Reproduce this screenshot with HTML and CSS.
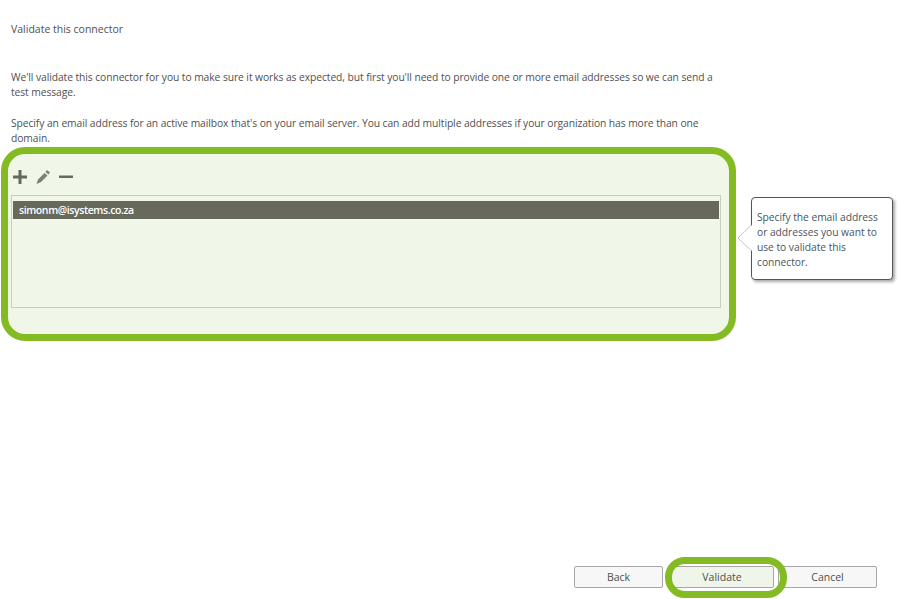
FILE: index.html
```html
<!DOCTYPE html>
<html lang="en">
<head>
  <meta charset="UTF-8" />
  <title>Validate this connector</title>
  <link rel="stylesheet" href="styles.css">
</head>
<body>

<div class="page">
  <h1 class="title">Validate this connector</h1>

  <div class="intro">
    <p>We'll validate this connector for you to make sure it works as expected, but first you'll need to provide one or more email addresses so we can send a test message.</p>
    <p>Specify an email address for an active mailbox that's on your email server. You can add multiple addresses if your organization has more than one domain.</p>
  </div>

  <div class="editor">
    <div class="frame">
      <div class="toolbar">
        <svg class="icon" width="16" height="14" viewBox="0 0 16 14"><path d="M6.500 0h3v5.500H15v3H9.500V14h-3V8.500H1v-3h5.500z"/></svg>
        <svg class="icon icon-pencil" width="16" height="14" viewBox="0 0 16 14"><path d="M12 0l3 2.500-1.500 2-3-2.500zM9.500 3l3 2.500-6.500 6.500-4.500 2 1.500-4.500z"/></svg>
        <svg class="icon" width="16" height="14" viewBox="0 0 16 14"><path d="M1 5.500h14v2.500H1z"/></svg>
      </div>
      <div class="listbox">
        <div class="row-selected">simonm@isystems.co.za</div>
      </div>
    </div>

    <div class="tip">
      <svg class="tip-arrow" width="15" height="26" viewBox="0 0 15 26"><path d="M15 0L1 13l14 13z" class="tip-arrow-fill"/><path d="M14 0.500L1 13l13 12.500" class="tip-arrow-line"/></svg>
      Specify the email address or addresses you want to use to validate this connector.
    </div>
  </div>

  <div class="footer">
    <button type="button" class="btn btn-back">Back</button>
    <button type="button" class="btn btn-validate">Validate<span class="ring"></span></button>
    <button type="button" class="btn btn-cancel">Cancel</button>
  </div>
</div>

</body>
</html>
```

FILE: styles.css
```css
html, body { margin: 0; padding: 0; background: #fff; }
body { font-family: "Open Sans", "Noto Sans", sans-serif; font-size: 10.5px; line-height: 15px; color: #505050; }
.page { height: 599px; box-sizing: border-box; display: flex; flex-direction: column; overflow: hidden; }
.title { margin: 22px 0 0 11px; font-size: 10.5px; font-weight: normal; line-height: 15px; color: #505050; }
.intro { margin: 33px 0 0 11px; width: 716px; font-size: 10.3px; letter-spacing: -0.08px; }
.intro p { margin: 0 0 16px; }
.editor { position: relative; margin: -15px 0 0 1px; }
.frame {
  width: 735px; height: 194px; box-sizing: border-box; padding: 16px 8px 0 3px;
  border: 7px solid #84bb23; border-radius: 24px; background: #f0f6e8;
}
.toolbar { display: flex; gap: 7px; height: 14px; margin-left: 1px; }
.icon { fill: #666a5e; display: block; }
.icon-pencil { fill: #7d8175; }
.listbox {
  margin-top: 11px; height: 113px; box-sizing: border-box; padding: 5px 1px;
  border: 1px solid #c4d0be;
}
.row-selected {
  height: 18px; line-height: 18px; padding-left: 6px; background: #66695b;
  color: #fff; font-weight: 600; letter-spacing: -0.4px;
}
.tip {
  position: absolute; left: 750px; top: 50px; width: 142px; height: 83px; box-sizing: border-box;
  padding: 12px 10px 0 5px; background: #fff; border: 1px solid #555; border-radius: 4px;
  box-shadow: 2px 2px 3px #aaa; color: #4a5560; font-size: 10.3px; letter-spacing: -0.05px;
}
.tip-arrow { position: absolute; left: -15px; top: 27px; display: block; }
.tip-arrow-fill { fill: #fff; }
.tip-arrow-line { fill: none; stroke: #c4c4c4; }
.footer { display: flex; margin: auto 0 11px 574px; }
.btn {
  height: 22px; box-sizing: border-box; padding: 1px 0 0; position: relative;
  font-family: inherit; font-size: 10.5px; line-height: 19px; color: #505050;
  background: #f7f7f7; border: 1px solid #a6a6a6; border-radius: 2px;
}
.btn-back { width: 89px; }
.btn-validate { width: 104px; margin: 0 4px 0 7px; background: #eff5e8; z-index: 1; }
.btn-cancel { width: 99px; }
.ring {
  position: absolute; left: -6px; top: -10px; width: 122px; height: 41px; box-sizing: border-box;
  border: 7px solid #84bb23; border-radius: 20px;
}
```
